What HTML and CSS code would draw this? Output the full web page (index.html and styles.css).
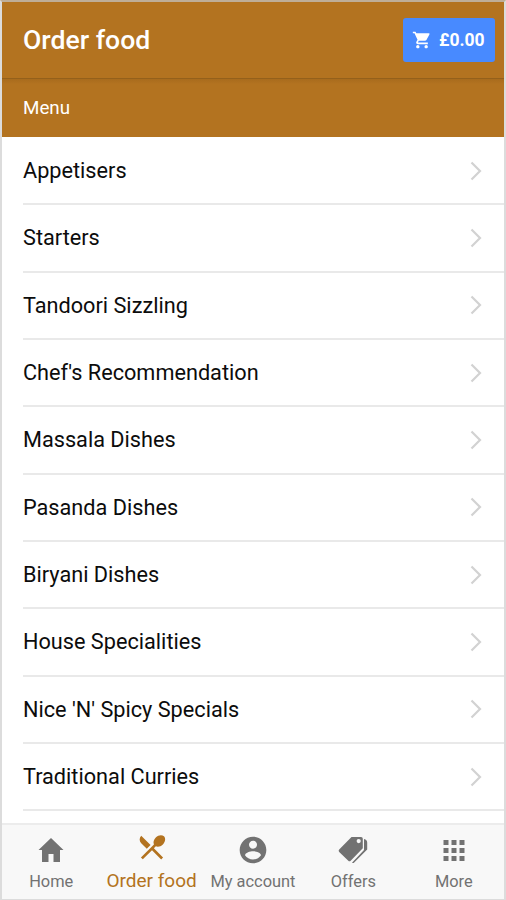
FILE: index.html
```html
<!DOCTYPE html>
<html lang="en">
<head>
<meta charset="utf-8">
<title>Order food</title>
<link rel="stylesheet" href="styles.css">
</head>
<body>
<div class="app">
  <header class="toolbar">
    <h1 class="title">Order food</h1>
    <button class="cart">
      <svg class="cart-icon" viewBox="0 0 24 24"><path d="M7 18c-1.100 0-1.990.9-1.990 2S5.900 22 7 22s2-.9 2-2-.9-2-2-2zM1 2v2h2l3.600 7.590-1.350 2.450c-.16.28-.25.61-.25.96 0 1.100.9 2 2 2h12v-2H7.420c-.14 0-.25-.11-.25-.25l.03-.12.9-1.630h7.450c.75 0 1.410-.41 1.750-1.030l3.580-6.490A1 1 0 0 0 20 4H5.210l-.94-2H1zm16 16c-1.100 0-1.990.9-1.990 2s.89 2 1.990 2 2-.9 2-2-.9-2-2-2z"/></svg>
      <span class="cart-total">£0.00</span>
    </button>
  </header>
  <div class="subheader"><span class="sub-text">Menu</span></div>
  <main class="list">
    <div class="row"><span class="name">Appetisers</span><svg class="chevron" viewBox="0 0 12 20"><path d="M1.500 1.500 10 10l-8.500 8.500"/></svg></div>
    <div class="row"><span class="name">Starters</span><svg class="chevron" viewBox="0 0 12 20"><path d="M1.500 1.500 10 10l-8.500 8.500"/></svg></div>
    <div class="row"><span class="name">Tandoori Sizzling</span><svg class="chevron" viewBox="0 0 12 20"><path d="M1.500 1.500 10 10l-8.500 8.500"/></svg></div>
    <div class="row"><span class="name">Chef's Recommendation</span><svg class="chevron" viewBox="0 0 12 20"><path d="M1.500 1.500 10 10l-8.500 8.500"/></svg></div>
    <div class="row"><span class="name">Massala Dishes</span><svg class="chevron" viewBox="0 0 12 20"><path d="M1.500 1.500 10 10l-8.500 8.500"/></svg></div>
    <div class="row"><span class="name">Pasanda Dishes</span><svg class="chevron" viewBox="0 0 12 20"><path d="M1.500 1.500 10 10l-8.500 8.500"/></svg></div>
    <div class="row"><span class="name">Biryani Dishes</span><svg class="chevron" viewBox="0 0 12 20"><path d="M1.500 1.500 10 10l-8.500 8.500"/></svg></div>
    <div class="row"><span class="name">House Specialities</span><svg class="chevron" viewBox="0 0 12 20"><path d="M1.500 1.500 10 10l-8.500 8.500"/></svg></div>
    <div class="row"><span class="name">Nice 'N' Spicy Specials</span><svg class="chevron" viewBox="0 0 12 20"><path d="M1.500 1.500 10 10l-8.500 8.500"/></svg></div>
    <div class="row"><span class="name">Traditional Curries</span><svg class="chevron" viewBox="0 0 12 20"><path d="M1.500 1.500 10 10l-8.500 8.500"/></svg></div>
  </main>
  <nav class="tabs">
    <a class="tab"><svg class="icon" viewBox="0 0 32 32"><path d="M16 4 3.500 16H7v12h6.500v-8h5v8H25V16h3.500z"/></svg><span class="label">Home</span></a>
    <a class="tab active"><svg class="icon" viewBox="0 0 24 24"><path d="M8.100 13.340l2.830-2.830L3.910 3.500c-1.560 1.560-1.560 4.090 0 5.660l4.190 4.180zm6.780-1.810c1.530.71 3.680.21 5.270-1.380 1.910-1.910 2.280-4.650.81-6.120-1.460-1.460-4.200-1.100-6.120.81-1.590 1.590-2.090 3.740-1.380 5.270L3.700 19.870l1.410 1.410L12 14.410l6.880 6.880 1.410-1.410L13.410 13l1.470-1.470z"/></svg><span class="label">Order food</span></a>
    <a class="tab"><svg class="icon" viewBox="0 0 24 24"><path d="M12 2C6.480 2 2 6.480 2 12s4.480 10 10 10 10-4.480 10-10S17.520 2 12 2zm0 3c1.660 0 3 1.340 3 3s-1.340 3-3 3-3-1.340-3-3 1.340-3 3-3zm0 14.200c-2.500 0-4.710-1.280-6-3.220.03-1.990 4-3.080 6-3.080 1.990 0 5.970 1.090 6 3.080-1.290 1.940-3.500 3.220-6 3.220z"/></svg><span class="label">My account</span></a>
    <a class="tab"><svg class="icon" viewBox="0 0 32 32"><path fill-rule="evenodd" d="M14.500 3H24q1.800 0 1.800 1.800v9.400L13.700 26.700q-1.200 1.200-2.400 0L2.200 18q-1.200-1.200 0-2.400zM21.700 5a2.100 2.100 0 1 0 0 4.200 2.100 2.100 0 0 0 0-4.200z"/><path d="M27 5q3.200.5 3.200 3.500v7L17.200 28.500q-1 1-2.200.2L27 16z"/></svg><span class="label">Offers</span></a>
    <a class="tab"><svg class="icon" viewBox="0 0 32 32"><path d="M5.500 6h5v5h-5zm8 0h5v5h-5zm8 0h5v5h-5zm-16 8h5v5h-5zm8 0h5v5h-5zm8 0h5v5h-5zm-16 8h5v5h-5zm8 0h5v5h-5zm8 0h5v5h-5z"/></svg><span class="label">More</span></a>
  </nav>
</div>
</body>
</html>
```
FILE: styles.css
```css
* { box-sizing: border-box; }
body { margin: 0; font-family: Roboto, "Liberation Sans", sans-serif; }
.app {
  width: 506px;
  height: 900px;
  display: flex;
  flex-direction: column;
  overflow: hidden;
  background: #fff;
  border: 2px solid #dcdcdc;
  border-top-color: #bfae98;
  border-bottom-width: 1px;
}
.toolbar {
  height: 77px;
  flex: none;
  display: flex;
  align-items: center;
  justify-content: space-between;
  padding: 0 9px 1px 21px;
  background: #b37320;
  border-bottom: 1px solid #94601b;
}
.title { margin: 0; font-size: 26.600px; font-weight: 500; line-height: 32px; color: #fff; }
.cart {
  width: 92px;
  height: 44px;
  display: flex;
  align-items: center;
  gap: 7px;
  padding: 0 0 0 9px;
  border: 0;
  border-radius: 3px;
  background: #488aff;
  color: #fff;
  font: 700 17.500px Roboto, sans-serif;
}
.cart-icon { width: 20px; height: 20px; flex: none; fill: currentColor; }
.subheader {
  height: 58px;
  flex: none;
  display: flex;
  align-items: center;
  padding: 0 21px;
  background: linear-gradient(#a86b1d, #b37320 5px);
  color: #fff;
  font-size: 18.800px;
}
.list { flex: 1; min-height: 0; padding: 1px 0 0 21px; }
.row {
  height: 67.330px;
  display: flex;
  align-items: center;
  justify-content: space-between;
  padding: 0 22px 0 0;
  border-bottom: 2px solid #e9e9e9;
  font-size: 21.700px;
  color: #0c0c0c;
}
.chevron { width: 12px; height: 20px; fill: none; stroke: #d2d2d2; stroke-width: 2.200; }
.tabs {
  height: 76px;
  flex: none;
  display: grid;
  grid-template-columns: repeat(5, minmax(0, 1fr));
  background: #f8f8f8;
  border-top: 2px solid #ececec;
}
.tab {
  display: flex;
  flex-direction: column;
  align-items: center;
  padding-top: 9px;
  color: #727272;
  font-size: 16.400px;
  white-space: nowrap;
}
.tab:first-child { padding-right: 2px; }
.icon { width: 32px; height: 32px; flex: none; fill: currentColor; }
.label { line-height: 22px; margin-top: 5px; }
.active { color: #b37320; font-size: 19px; padding: 6px 2px 0 0; }
.active .label { margin-top: 7px; }
```
